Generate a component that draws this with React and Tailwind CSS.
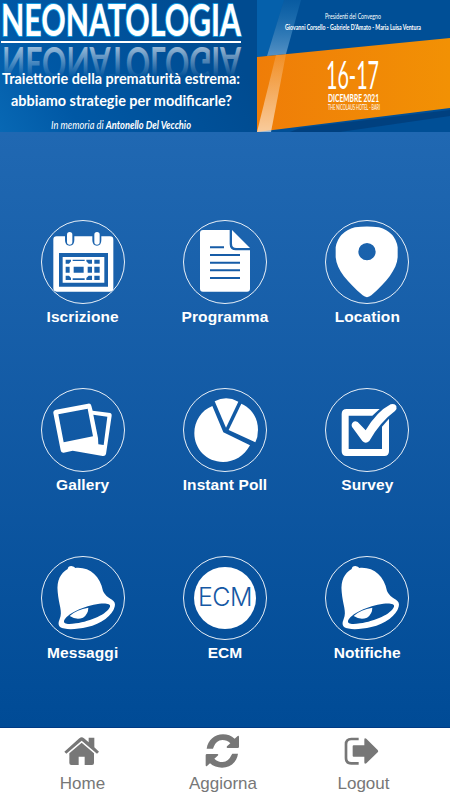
const CalendarIcon = () => (
  <svg viewBox="32 30 252 252" className="size-full" fill="#fff">
    <path fillRule="evenodd" d="M79 79H104V90Q104 107 118 107Q132 107 132 90V79H186V90Q186 107 200 107Q213 107 213 90V79H239Q249 79 249 89V235Q249 245 239 245H79Q69 245 69 235V89Q69 79 79 79ZM86 129V230H233V129Z" />
    <rect x="110" y="66" width="16" height="38" rx="8" />
    <rect x="192" y="66" width="16" height="38" rx="8" />
    <path fillRule="evenodd" d="M97 141H222V218H97ZM106 149V161H116L122 154V149ZM127 149V153H163V149ZM168 149V154L175 161H185V149ZM192 149V161H208V149ZM106 170V188H118V170ZM130 170V188H160V170ZM172 170V188H185V170ZM192 170V188H208V170ZM106 197V210H122V204L116 197ZM127 205V210H163V205ZM175 197L168 204V210H185V197ZM192 197V210H208V197Z" />
  </svg>
);

const DocumentIcon = () => (
  <svg viewBox="39 30 252 252" className="size-full" fill="#fff">
    <path d="M99 60H179V102Q179 121 198 121H240V236Q240 245 231 245H99Q90 245 90 236V69Q90 60 99 60Z" />
    <path d="M186 60L240 114H199Q186 114 186 101Z" />
    <path d="M120 112H162M120 135H210M120 158H210M120 181H210M120 204H210" stroke="#165ca7" strokeWidth="6" />
  </svg>
);

const PinIcon = () => (
  <svg viewBox="31 30 252 252" className="size-full" fill="#fff">
    <path fillRule="evenodd" d="M121 52Q157 47 193 52Q242 66 249 112V142C247 178 215 217 170 256Q157 267 144 256C99 217 66 180 63 142V112Q71 66 121 52ZM157 99A26 26 0 1 0 157 151A26 26 0 1 0 157 99Z" />
  </svg>
);

const GalleryIcon = () => (
  <svg viewBox="32 24 252 252" className="size-full" fill="#fff">
    <path fillRule="evenodd" d="M77 89L173 71Q181 69 183 77L187 92L240 99Q245 101 244 107L227 222Q225 229 217 228L127 212L100 218Q92 219 91 211L69 99Q68 91 77 89ZM84 103L100 187L188 169L172 86ZM189 104L203 174L204 193L220 195L231 110Z" />
  </svg>
);

const PieIcon = () => (
  <svg viewBox="39 24 252 252" className="size-full" fill="#fff">
    <path d="M127 78L160 157L240 196C222 229 193 246 159 246C110 246 73 207 73 160C73 123 94 91 127 78Z" />
    <path d="M134 64Q169 45 205 65L168 143Z" />
    <path d="M214 71C246 85 264 115 264 149Q264 171 256 187L176 150Z" />
  </svg>
);

const SurveyIcon = () => (
  <svg viewBox="31 24 252 252" className="size-full" fill="#fff">
    <path d="M96 87H195L173 107H102V207H202V140L223 116V214Q223 228 209 228H95Q81 228 81 214V102Q81 87 96 87Z" />
    <path d="M129 126Q118 121 113 129Q108 137 115 145L143 183Q153 194 164 183Q196 126 241 93Q248 86 245 78Q240 69 228 73Q187 94 153 151Z" />
  </svg>
);

const BellIcon = () => (
  <svg viewBox="32 33 252 252" className="size-full" fill="#fff">
    <path fillRule="evenodd" d="M112 72Q113 63 123 63Q132 64 135 69C177 65 209 92 218 138Q224 153 245 164Q257 172 253 185C247 210 213 237 171 246C137 254 103 255 89 246Q81 239 88 222C98 200 85 179 82 140C79 107 90 85 112 72ZM101 228C99 237 113 239 137 235C182 228 231 207 239 185C242 176 227 174 207 176C162 182 107 207 101 228Z" />
    <path d="M118 213Q139 193 174 188Q174 207 158 218Q138 226 118 213Z" />
  </svg>
);

const EcmIcon = () => (
  <div className="flex size-[62px] items-center justify-center rounded-full bg-white font-['Inter',sans-serif] text-[25px] font-light tracking-[-0.5px] text-[#1558a4]">
    ECM
  </div>
);

const items = [
  { label: 'Iscrizione', Icon: CalendarIcon },
  { label: 'Programma', Icon: DocumentIcon },
  { label: 'Location', Icon: PinIcon },
  { label: 'Gallery', Icon: GalleryIcon },
  { label: 'Instant Poll', Icon: PieIcon },
  { label: 'Survey', Icon: SurveyIcon },
  { label: 'Messaggi', Icon: BellIcon },
  { label: 'ECM', Icon: EcmIcon },
  { label: 'Notifiche', Icon: BellIcon },
];

const HomeIcon = () => (
  <svg viewBox="193 43 105 105" className="size-[35px]" fill="#777">
    <path d="M194 96L239 56Q246 50 253 56L267 68V54H284V83L298 96L292 102L246 63L200 102Z" />
    <path d="M246 69L283 101V130Q283 136 277 136H255V111H237V136H215Q209 136 209 130V101Z" />
  </svg>
);

const RefreshIcon = () => (
  <svg viewBox="615 43 105 105" className="size-[35px]" fill="#777">
    <path d="M620 87C624 61 644 44 669 44Q689 44 704 57L713 49Q717 47 717 52V82Q717 85 713 85H682Q678 84 681 80L691 71Q681 61 667 61Q648 62 641 82L639 87Z" />
    <path d="M714 102C711 127 691 144 666 144Q645 144 630 131L621 139Q617 141 617 136V107Q617 103 621 103H652Q657 104 653 108L643 117Q653 127 668 127Q686 126 694 107L697 102Z" />
  </svg>
);

const LogoutIcon = () => (
  <svg viewBox="1033 43 105 105" className="size-[35px]" fill="#777">
    <path d="M1077 58H1055Q1039 58 1039 74V115Q1039 131 1055 131H1077" fill="none" stroke="#777" strokeWidth="8" />
    <path d="M1062 77H1094V60Q1094 53 1100 57L1134 91Q1137 95 1134 98L1100 131Q1094 135 1094 128V111H1062Q1059 111 1059 108V80Q1059 77 1062 77Z" />
  </svg>
);

const tabs = [
  { label: 'Home', Icon: HomeIcon, shift: '-translate-x-px' },
  { label: 'Aggiorna', Icon: RefreshIcon, shift: '-translate-x-px' },
  { label: 'Logout', Icon: LogoutIcon, shift: '-translate-x-[2px]' },
];

function Banner() {
  return (
    <svg viewBox="0 0 450 132" className="block h-[132px] w-full shrink-0 font-['Lato',sans-serif]" fill="#fff">
      <defs>
        <linearGradient id="left" x1="0" y1="1" x2="1" y2="0.7">
          <stop offset="0" stopColor="#0868b4" />
          <stop offset="0.3" stopColor="#0058a5" />
          <stop offset="1" stopColor="#004b90" />
        </linearGradient>
        <linearGradient id="orange" x1="0" x2="1">
          <stop offset="0" stopColor="#ef7d08" />
          <stop offset="1" stopColor="#f29104" />
        </linearGradient>
        <linearGradient id="beam" x1="0" y1="0" x2="0" y2="1">
          <stop offset="0" stopColor="#3aa0e0" stopOpacity="0.15" />
          <stop offset="1" stopColor="#9cc8ea" stopOpacity="0.55" />
        </linearGradient>
        <linearGradient id="glow" x1="0" y1="0" x2="0" y2="1">
          <stop offset="0" stopColor="#fff" stopOpacity="0.12" />
          <stop offset="1" stopColor="#fff" stopOpacity="0.6" />
        </linearGradient>
        {/* the mirrored title is flipped, so this runs along negative y */}
        <linearGradient id="mirror" gradientUnits="userSpaceOnUse" x1="0" y1="0" x2="0" y2="-30">
          <stop offset="0" stopColor="#fff" stopOpacity="0.6" />
          <stop offset="0.4" stopColor="#fff" stopOpacity="0.35" />
          <stop offset="1" stopColor="#fff" stopOpacity="0" />
        </linearGradient>
      </defs>
      <rect width="257" height="132" fill="url(#left)" />
      <rect x="257" width="193" height="132" fill="#004f96" />
      <path d="M257 0H284L267 56L257 57Z" fill="#0560ab" />
      <path d="M284 0H301L286 54L267 56Z" fill="url(#beam)" />
      <path d="M300 128L450 110V116L340 132H290Z" fill="#003b75" opacity="0.7" />
      <path d="M257 57L450 38V108L257 132Z" fill="url(#orange)" />
      <path d="M276 55L286 54L271 132H257Z" fill="url(#glow)" />
      <text transform="translate(2 47) scale(1 -1)" fontSize="44" fontWeight="700" textLength="239" lengthAdjust="spacingAndGlyphs" fill="url(#mirror)">NEONATOLOGIA</text>
      <text x="1" y="36" fontSize="44.5" fontWeight="700" textLength="240" lengthAdjust="spacingAndGlyphs" stroke="#159be0" strokeWidth="1.8" paintOrder="stroke">NEONATOLOGIA</text>
      <rect x="1" y="41" width="240" height="2" />
      <text x="2" y="84" fontSize="16" fontWeight="700" textLength="238" lengthAdjust="spacingAndGlyphs">Traiettorie della prematurità estrema:</text>
      <text x="11" y="106" fontSize="16" fontWeight="700" textLength="221" lengthAdjust="spacingAndGlyphs">abbiamo strategie per modificarle?</text>
      <text x="51" y="129" fontSize="10.5" fontStyle="italic" textLength="140" lengthAdjust="spacingAndGlyphs">
        In memoria di <tspan fontWeight="700">Antonello Del Vecchio</tspan>
      </text>
      <text x="325" y="19" fontSize="8" textLength="56" lengthAdjust="spacingAndGlyphs">Presidenti del Convegno</text>
      <text x="285" y="30" fontSize="8" fontWeight="700" textLength="136" lengthAdjust="spacingAndGlyphs">Giovanni Corsello - Gabriele D'Amato - Maria Luisa Ventura</text>
      <text x="326" y="89" fontSize="39" textLength="53" lengthAdjust="spacingAndGlyphs">16-17</text>
      <text x="328" y="102" fontSize="12" fontWeight="700" textLength="51" lengthAdjust="spacingAndGlyphs">DICEMBRE 2021</text>
      <text x="328" y="110" fontSize="7" textLength="52" lengthAdjust="spacingAndGlyphs">THE NICOLAUS HOTEL - BARI</text>
    </svg>
  );
}

export default function App() {
  return (
    <div className="flex h-[800px] w-[450px] flex-col overflow-hidden bg-white font-['Liberation_Sans',Arial,sans-serif]">
      <Banner />
      <main className="flex-1 border-b border-[#003b85] bg-linear-to-b from-[#2068b2] to-[#004b96] px-[11.5px] pt-[88px]">
        <div className="grid grid-cols-3 gap-y-[60px]">
          {items.map(({ label, Icon }) => (
            <button key={label} className="flex h-[108px] flex-col items-center">
              <span className="relative flex size-[84px] shrink-0 items-center justify-center">
                <Icon />
                <span className="absolute inset-0 rounded-full border border-white/90" />
              </span>
              <span className="mt-[3px] text-[15.5px] leading-5 font-bold tracking-[0.08px] text-white">{label}</span>
            </button>
          ))}
        </div>
      </main>
      <nav className="grid h-[72px] shrink-0 grid-cols-[141px_140px_141px] pl-[12px]">
        {tabs.map(({ label, Icon, shift }) => (
          <button key={label} className="flex flex-col items-center pt-[6px] text-[17px] leading-5 text-[#777]">
            <span className={shift}>
              <Icon />
            </span>
            <span className="mt-[5px]">{label}</span>
          </button>
        ))}
      </nav>
    </div>
  );
}
